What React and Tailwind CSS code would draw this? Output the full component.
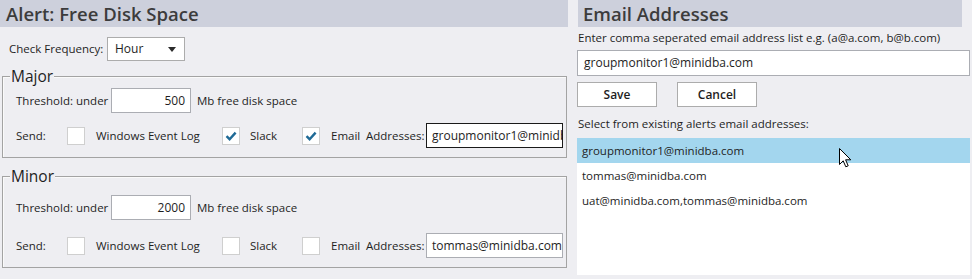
import React from "react";

const FONT = { fontFamily: '"Open Sans", "Noto Sans", sans-serif' };

function Check({ checked }) {
  return (
    <span className="w-[18px] h-[18px] bg-white border border-[#cfcfcf] flex items-center justify-center shrink-0">
      {checked && (
        <svg width="12" height="10" viewBox="0 0 12 10">
          <path d="M1.5 5.2 L4.6 8.2 L10.6 1.6" fill="none" stroke="#1f6a96" strokeWidth="2.4" />
        </svg>
      )}
    </span>
  );
}

function Group({ title, value, email, checks, focused, topGap, sendGap }) {
  return (
    <div className={`relative ml-[2px] w-[565px] border border-[#a3a3a3] shadow-[inset_1px_1px_0_#fafafa] ${topGap}`}>
      <span className="absolute left-[7px] -top-[11px] px-[1px] bg-[#eeeef2] text-[15.5px] leading-[20px] text-[#1e1e1e]">{title}</span>
      <div className="flex items-center pl-[13px] text-[11.5px] text-[#1e1e1e]">
        <span className="w-[60px]">Threshold:</span>
        <span className="w-[35px]">under</span>
        <span className="w-[80px] h-[25px] bg-white border border-[#abadb3] flex items-center justify-end pr-[5px] text-[12px]">{value}</span>
        <span className="ml-[6px]">Mb free disk space</span>
      </div>
      <div className={`flex items-center pl-[13px] pb-[9px] text-[11.5px] text-[#1e1e1e] ${sendGap}`}>
        <span className="w-[51px]">Send:</span>
        <Check checked={checks[0]} />
        <span className="ml-[11px] w-[126px]">Windows Event Log</span>
        <Check checked={checks[1]} />
        <span className="ml-[10px] w-[52px]">Slack</span>
        <Check checked={checks[2]} />
        <span className="ml-[11px] w-[35px]">Email</span>
        <span className="w-[60px]">Addresses:</span>
        <span className={`w-[137px] h-[25px] bg-white flex items-center pl-[5px] overflow-hidden whitespace-nowrap text-[12px] ${focused ? "border border-[#1a1a1a]" : "border border-[#abadb3]"}`}>{email}</span>
      </div>
    </div>
  );
}

export default function App() {
  return (
    <div className="relative w-[972px] h-[279px] bg-[#eeeef2] flex overflow-hidden" style={FONT}>
      {/* Left: alert */}
      <div className="w-[568px] shrink-0">
        <div className="h-[27px] bg-[#cdd0dc] pl-[6px] flex items-center text-[18.5px] font-semibold text-[#3c3c3c]">
          Alert:&nbsp;Free Disk Space
        </div>
        <div className="mt-[10px] flex items-center pl-[9px] text-[11.5px] text-[#1e1e1e]">
          <span className="w-[98px]">Check Frequency:</span>
          <span className="w-[78px] h-[24px] bg-white border border-[#acacac] flex items-center pl-[7px] text-[12px]">
            Hour
            <svg className="ml-auto mr-[8px]" width="8" height="5" viewBox="0 0 8 5">
              <path d="M0 0 L8 0 L4 5 Z" fill="#2b2b2b" />
            </svg>
          </span>
        </div>
        <Group title="Major" value="500" email="groupmonitor1@minidba.com" checks={[false, true, true]} focused topGap="mt-[15px] pt-[11px]" sendGap="mt-[10px]" />
        <Group title="Minor" value="2000" email="tommas@minidba.com" checks={[false, false, false]} topGap="mt-[18px] pt-[18px]" sendGap="mt-[13px]" />
      </div>

      {/* Right: email addresses */}
      <div className="ml-[9px] w-[393px] shrink-0 text-[11.5px] text-[#1e1e1e]">
        <div className="ml-[1px] w-[384px] h-[27px] bg-[#cdd0dc] pl-[5px] flex items-center text-[18.5px] font-semibold text-[#3c3c3c]">
          Email Addresses
        </div>
        <div className="h-[22px] flex items-center pl-[1px]">Enter comma seperated email address list e.g. (a@a.com, b@b.com)</div>
        <div className="mt-[1px] h-[26px] bg-white border border-[#abadb3] flex items-center pl-[6px] text-[12px]">groupmonitor1@minidba.com</div>
        <div className="mt-[6px] flex gap-[20px]">
          <button className="w-[80px] h-[25px] bg-white border border-[#acacac] text-[12px] font-semibold">Save</button>
          <button className="w-[80px] h-[25px] bg-white border border-[#acacac] text-[12px] font-semibold">Cancel</button>
        </div>
        <div className="h-[31px] flex items-center pl-[1px] pt-[2px]">Select from existing alerts email addresses:</div>
        <div className="relative h-[137px] bg-white text-[11.5px]">
          <div className="h-[25px] bg-[#a3d6ee] flex items-center pl-[5px]">groupmonitor1@minidba.com</div>
          <div className="h-[25px] flex items-center pl-[5px]">tommas@minidba.com</div>
          <div className="h-[25px] flex items-center pl-[5px]">uat@minidba.com,tommas@minidba.com</div>
          <svg className="absolute left-[262px] top-[10px]" width="13" height="20" viewBox="0 0 13 20">
            <path d="M0.5 0.5 L0.5 16.5 L4.2 12.8 L6.8 18.8 L9.2 17.8 L6.6 11.8 L11.8 11.8 Z" fill="#ffffff" stroke="#000000" strokeWidth="1" strokeLinejoin="miter" />
          </svg>
        </div>
      </div>
    </div>
  );
}
